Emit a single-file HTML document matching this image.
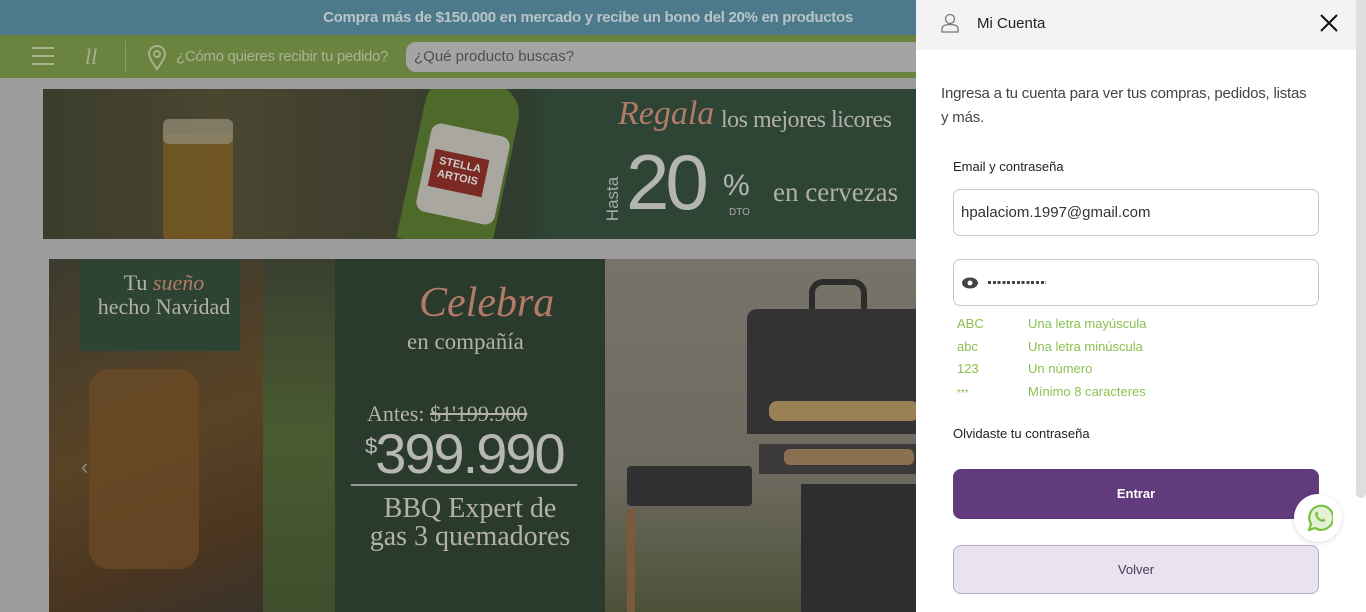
<!DOCTYPE html>
<html><head><meta charset="utf-8"><style>
*{margin:0;padding:0;box-sizing:border-box}
body{width:1366px;height:612px;overflow:hidden;background:#9c9c9c;font-family:"Liberation Sans",sans-serif;position:relative}
.abs{position:absolute}
</style></head><body>
<div class="abs" style="left:0;top:0;width:916px;height:35px;background:#4c7a8b;color:#b9c4c8;font-size:15px;font-weight:bold;text-align:center;line-height:35px;padding-left:260px;letter-spacing:-0.3px">Compra más de $150.000 en mercado y recibe un bono del 20% en productos</div>
<div class="abs" style="left:0;top:35px;width:916px;height:43px;background:#6a843f"></div>
<div class="abs" style="left:32px;top:47px;width:22px;height:2px;background:#a7b28d;box-shadow:0 8px 0 #a7b28d,0 16px 0 #a7b28d"></div>
<div class="abs" style="left:85px;top:44px;color:#a7b28d;font-size:22px;font-family:'Liberation Serif',serif;font-style:italic">ll</div>
<div class="abs" style="left:125px;top:41px;width:1px;height:32px;background:#8a9a6a"></div>
<svg class="abs" style="left:147px;top:45px" width="20" height="26" viewBox="0 0 20 26"><path d="M10 24C4 16 2 12 2 9a8 8 0 0116 0c0 3-2 7-8 15z" fill="none" stroke="#a7b28d" stroke-width="2"/><circle cx="10" cy="9" r="3" fill="none" stroke="#a7b28d" stroke-width="2"/></svg>
<div class="abs" style="left:176px;top:48px;color:#a9b495;font-size:15px;letter-spacing:-0.3px">¿Cómo quieres recibir tu pedido?</div>
<div class="abs" style="left:406px;top:42px;width:520px;height:30px;background:#a4a4a4;border-radius:10px;color:#4f4f4f;font-size:15px;line-height:30px;padding-left:8px">¿Qué producto buscas?</div>
<div class="abs" style="left:43px;top:89px;width:873px;height:150px;background:linear-gradient(90deg,#3b3d2c 0%,#4a4630 20%,#3e3e2e 40%,#2f3d2f 55%,#2e4435 58%,#2e4435 100%);overflow:hidden">
 <div class="abs" style="left:120px;top:45px;width:70px;height:105px;background:#7a5a22;border-radius:4px;opacity:.8"></div>
 <div class="abs" style="left:120px;top:30px;width:70px;height:25px;background:#8e8872;border-radius:6px;opacity:.8"></div>
 <div class="abs" style="left:370px;top:-10px;width:95px;height:170px;background:#4d6a2a;border-radius:30px 30px 0 0;transform:rotate(12deg)"></div>
 <div class="abs" style="left:380px;top:40px;width:80px;height:90px;background:#a9a79f;border-radius:10px;transform:rotate(12deg)"></div>
 <div class="abs" style="left:388px;top:65px;width:55px;height:38px;background:#7a2a22;transform:rotate(12deg);color:#ccc;font-size:11px;font-weight:bold;text-align:center;line-height:13px;padding-top:5px">STELLA<br>ARTOIS</div>
 <div class="abs" style="left:575px;top:6px;font-family:'Liberation Serif',serif;font-style:italic;font-size:34px;color:#b27a68">Regala</div>
 <div class="abs" style="left:678px;top:18px;font-family:'Liberation Serif',serif;font-size:24px;color:#b0b0a8;letter-spacing:-0.5px">los mejores licores</div>
 <div class="abs" style="left:548px;top:100px;font-size:17px;color:#aaa;transform:rotate(-90deg)">Hasta</div>
 <div class="abs" style="left:583px;top:48px;font-size:78px;color:#b5b5b0;letter-spacing:-4px">20</div>
 <div class="abs" style="left:680px;top:80px;font-size:30px;color:#b5b5b0">%</div>
 <div class="abs" style="left:686px;top:118px;font-size:10px;color:#aaa">DTO</div>
 <div class="abs" style="left:730px;top:88px;font-family:'Liberation Serif',serif;font-size:27px;color:#b0b0a8">en cervezas</div>
</div>
<div class="abs" style="left:49px;top:259px;width:867px;height:353px;overflow:hidden;background:#3e3a30">
 <div class="abs" style="left:0;top:0;width:214px;height:353px;background:linear-gradient(160deg,#3c3b30,#5a4325 50%,#4a3520 80%,#3a332b)"></div>
 <div class="abs" style="left:40px;top:110px;width:110px;height:200px;border-radius:20px;background:#6a4a25;opacity:.8"></div>
 <div class="abs" style="left:31px;top:0;width:160px;height:92px;background:#2d4433"></div>
 <div class="abs" style="left:45px;top:12px;width:140px;text-align:center;font-family:'Liberation Serif',serif;font-size:22px;line-height:24px;color:#b4b2a8">Tu <i style="color:#b27a68">sueño</i><br>hecho Navidad</div>
 <div class="abs" style="left:32px;top:195px;color:#888;font-size:22px">‹</div>
 <div class="abs" style="left:214px;top:0;width:72px;height:353px;background:linear-gradient(180deg,#3a3f30,#4a5a30 50%,#3f4e2c)"></div>
 <div class="abs" style="left:286px;top:0;width:270px;height:353px;background:#2a3a2d"></div>
 <div class="abs" style="left:370px;top:20px;font-family:'Liberation Serif',serif;font-style:italic;font-size:42px;color:#b27a68">Celebra</div>
 <div class="abs" style="left:358px;top:70px;font-family:'Liberation Serif',serif;font-size:23px;color:#b4b2a8">en compañía</div>
 <div class="abs" style="left:318px;top:142px;font-family:'Liberation Serif',serif;font-size:22px;color:#b4b2a8">Antes: <s>$1'199.900</s></div>
 <div class="abs" style="left:316px;top:162px;font-size:56px;color:#b8b8b2;letter-spacing:-2px"><sup style="font-size:22px">$</sup>399.990</div>
 <div class="abs" style="left:302px;top:225px;width:226px;height:2px;background:#999"></div>
 <div class="abs" style="left:290px;top:236px;width:262px;text-align:center;font-family:'Liberation Serif',serif;font-size:28px;line-height:28px;color:#b4b2a8">BBQ Expert de<br>gas 3 quemadores</div>
 <div class="abs" style="left:556px;top:0;width:311px;height:353px;background:linear-gradient(180deg,#77736a,#6e6a60 60%,#4c5238)"></div>
 <div class="abs" style="left:760px;top:20px;width:58px;height:34px;border:6px solid #2c2c2c;border-bottom:none;border-radius:14px 14px 0 0"></div>
 <div class="abs" style="left:698px;top:50px;width:180px;height:125px;background:#333;border-radius:10px 10px 0 0"></div>
 <div class="abs" style="left:720px;top:142px;width:150px;height:20px;background:#9a8055;border-radius:8px"></div>
 <div class="abs" style="left:710px;top:185px;width:160px;height:30px;background:#3a3a3a"></div>
 <div class="abs" style="left:735px;top:190px;width:130px;height:16px;background:#8a7050;border-radius:6px"></div>
 <div class="abs" style="left:752px;top:225px;width:115px;height:128px;background:#2e2e2e"></div>
 <div class="abs" style="left:578px;top:207px;width:125px;height:40px;background:#303030;border-radius:4px"></div>
 <div class="abs" style="left:578px;top:250px;width:8px;height:103px;background:#7a5a3a"></div>
</div>
<div class="abs" style="left:916px;top:0;width:450px;height:612px;background:#fff"></div>
<div class="abs" style="left:916px;top:0;width:440px;height:50px;background:#f3f3f3"></div>
<svg class="abs" style="left:940px;top:13px" width="20" height="20" viewBox="0 0 20 20"><circle cx="10" cy="6" r="4.5" fill="none" stroke="#777" stroke-width="1.3"/><path d="M2 19v-3c0-3 3-4.5 8-4.5s8 1.5 8 4.5v3z" fill="none" stroke="#777" stroke-width="1.3"/></svg>
<div class="abs" style="left:977px;top:15px;font-size:15px;color:#222">Mi Cuenta</div>
<svg class="abs" style="left:1320px;top:14px" width="18" height="18" viewBox="0 0 18 18"><path d="M1 1L17 17M17 1L1 17" stroke="#111" stroke-width="2"/></svg>
<div class="abs" style="left:1356px;top:0;width:10px;height:498px;background:#dedede;border-radius:0 0 5px 5px"></div>
<div class="abs" style="left:941px;top:82px;width:376px;font-size:15px;line-height:24px;color:#444;letter-spacing:-0.2px">Ingresa a tu cuenta para ver tus compras, pedidos, listas y más.</div>
<div class="abs" style="left:953px;top:159px;font-size:13px;color:#222">Email y contraseña</div>
<div class="abs" style="left:953px;top:189px;width:366px;height:47px;border:1px solid #c9c9c9;border-radius:7px;padding-left:7px;line-height:45px;font-size:15px;color:#333">hpalaciom.1997@gmail.com</div>
<div class="abs" style="left:953px;top:259px;width:366px;height:47px;border:1px solid #c9c9c9;border-radius:7px"></div>
<svg class="abs" style="left:961px;top:277px" width="18" height="12" viewBox="0 0 18 12"><ellipse cx="9" cy="6" rx="8" ry="5.5" fill="#444"/><circle cx="9" cy="6" r="2.5" fill="#fff"/></svg>
<div class="abs" style="left:988px;top:281px;width:58px;height:3px;background:repeating-linear-gradient(90deg,#444 0 3px,transparent 3px 4.8px)"></div>
<div class="abs" style="left:957px;top:313px;font-size:13px;line-height:22.5px;color:#8cc152">ABC<br>abc<br>123<br><span style="font-size:10px">***</span></div>
<div class="abs" style="left:1028px;top:313px;font-size:13px;line-height:22.5px;color:#8cc152">Una letra mayúscula<br>Una letra minúscula<br>Un número<br>Mínimo 8 caracteres</div>
<div class="abs" style="left:953px;top:426px;font-size:13px;color:#222">Olvidaste tu contraseña</div>
<div class="abs" style="left:953px;top:469px;width:366px;height:50px;background:#623b7c;border-radius:8px;color:#fff;font-size:13px;font-weight:bold;text-align:center;line-height:50px">Entrar</div>
<div class="abs" style="left:953px;top:545px;width:366px;height:49px;background:#e8e3ec;border:1px solid #b9a8c4;border-radius:8px;color:#4a3a5c;font-size:13px;text-align:center;line-height:47px">Volver</div>
<div class="abs" style="left:1294px;top:494px;width:48px;height:48px;border-radius:50%;background:#fff;box-shadow:0 1px 5px rgba(0,0,0,.15)"></div>
<svg class="abs" style="left:1305px;top:504px" width="28" height="28" viewBox="0 0 28 28"><path d="M4 26l2-6a12 12 0 1 1 4 4z" fill="#e3f1d5" stroke="#7cc040" stroke-width="2.2" stroke-linejoin="round"/><path d="M10 9c0 5 4 9 9 9l1.5-2-2.5-1.5-1.2 1.2c-2-1-3.5-2.5-4.5-4.5l1.2-1.2L12 7.5z" fill="#7cc040"/></svg>
</body></html>
